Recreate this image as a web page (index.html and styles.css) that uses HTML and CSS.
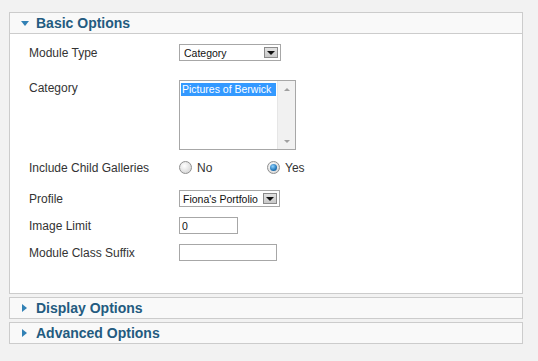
FILE: index.html
```html
<!DOCTYPE html>
<html lang="en">
<head>
    <meta charset="UTF-8">
    <title>Module Options</title>
    <link rel="stylesheet" href="styles.css">
</head>
<body>
    <div class="panel">
        <div class="panel-head open">
            <span class="arrow down"></span>
            <h3>Basic Options</h3>
        </div>
        <div class="panel-body">
            <div class="row">
                <label>Module Type</label>
                <div class="select w-type"><span>Category</span><i class="drop"></i></div>
            </div>
            <div class="row top">
                <label>Category</label>
                <div class="listbox">
                    <div class="items">
                        <div class="item selected">Pictures of Berwick</div>
                    </div>
                    <div class="scroll">
                        <i class="up"></i>
                        <i class="dn"></i>
                    </div>
                </div>
            </div>
            <div class="row radios">
                <label>Include Child Galleries</label>
                <span class="opt"><span class="radio"></span>No</span>
                <span class="opt"><span class="radio on"></span>Yes</span>
            </div>
            <div class="row">
                <label>Profile</label>
                <div class="select w-profile"><span>Fiona's Portfolio</span><i class="drop"></i></div>
            </div>
            <div class="row">
                <label>Image Limit</label>
                <div class="input w-limit">0</div>
            </div>
            <div class="row">
                <label>Module Class Suffix</label>
                <div class="input w-suffix"></div>
            </div>
        </div>
    </div>

    <div class="panel">
        <div class="panel-head">
            <span class="arrow right"></span>
            <h3>Display Options</h3>
        </div>
    </div>

    <div class="panel">
        <div class="panel-head">
            <span class="arrow right"></span>
            <h3>Advanced Options</h3>
        </div>
    </div>
</body>
</html>
```

FILE: styles.css
```css
body{
    margin: 0;
    padding: 12px 0 0 9px;
    background: #f2f2f2;
    font-family: "Liberation Sans", Arial, sans-serif;
    color: #333;
}
.panel{
    width: 514px;
    box-sizing: border-box;
    border: 1px solid #cccccc;
    background: #f9f9f9;
    margin-bottom: 3px;
}
.panel-head{
    height: 20px;
    display: flex;
    align-items: center;
    padding-left: 11px;
}
.panel-head.open{
    border-bottom: 1px solid #cccccc;
}
.panel-head h3{
    margin: 0;
    font-size: 14px;
    font-weight: bold;
    color: #235b80;
}
.arrow{
    width: 0;
    height: 0;
    margin-right: 6px;
}
.arrow.down{
    border-left: 4px solid transparent;
    border-right: 4px solid transparent;
    border-top: 5px solid #3281b5;
    margin-right: 7px;
}
.arrow.right{
    border-top: 4px solid transparent;
    border-bottom: 4px solid transparent;
    border-left: 5px solid #3281b5;
    margin-left: 1px;
    margin-right: 9px;
}

.panel-body{
    background: #fff;
    height: 259px;
    box-sizing: border-box;
    padding: 10px 0 0 19px;
}
.row{
    display: flex;
    align-items: center;
    font-size: 12px;
    margin-bottom: 10px;
}
.row label{
    width: 150px;
    line-height: 16px;
}
.row.top{
    align-items: flex-start;
    margin-top: 19px;
}
.row.radios{
    height: 15px;
    margin-bottom: 15px;
}

.select, .input{
    box-sizing: border-box;
    height: 17px;
    border: 1px solid #a7a7a7;
    background: #fff;
    font-size: 10.5px;
    color: #111;
    display: flex;
    align-items: center;
    padding-left: 4px;
}
.select span{
    flex: 1;
    white-space: nowrap;
    overflow: hidden;
}
.w-type{ width: 102px; }
.w-profile{ width: 101px; padding-left: 3px; }
.w-limit{ width: 59px; padding-left: 2px; }
.w-suffix{ width: 98px; }
.drop{
    width: 14px;
    height: 11px;
    box-sizing: border-box;
    margin: 0 2px 0 1px;
    border: 1px solid #8a8a8a;
    background: linear-gradient(#e2e2e2, #c9c9c9);
    display: flex;
    align-items: center;
    justify-content: center;
}
.drop::after{
    content: "";
    border-left: 4px solid transparent;
    border-right: 4px solid transparent;
    border-top: 4px solid #111;
    margin-top: 1px;
}

.listbox{
    width: 117px;
    height: 70px;
    box-sizing: border-box;
    border: 1px solid #a7a7a7;
    display: flex;
    font-size: 10.5px;
}
.items{
    flex: 1;
    padding: 2px 1px;
    overflow: hidden;
}
.item.selected{
    background: #3399ff;
    color: #fff;
    height: 13px;
    line-height: 13px;
    padding-left: 1px;
    white-space: nowrap;
}
.scroll{
    width: 18px;
    background: #f1f1f1;
    border-left: 1px solid #e6e6e6;
    display: flex;
    flex-direction: column;
    justify-content: space-between;
    align-items: center;
    padding: 7px 0 6px;
    box-sizing: border-box;
}
.scroll .up{
    border-left: 3px solid transparent;
    border-right: 3px solid transparent;
    border-bottom: 3px solid #a0a0a0;
}
.scroll .dn{
    border-left: 3px solid transparent;
    border-right: 3px solid transparent;
    border-top: 3px solid #a0a0a0;
}

.opt{
    display: flex;
    align-items: center;
    width: 88px;
}
.radio{
    width: 13px;
    height: 13px;
    box-sizing: border-box;
    border: 1px solid #8f8f8f;
    border-radius: 50%;
    background: radial-gradient(circle at 40% 35%, #ffffff, #dcdcdc 70%, #c9c9c9);
    margin-right: 5px;
    display: flex;
    align-items: center;
    justify-content: center;
}
.radio.on::after{
    content: "";
    width: 7px;
    height: 7px;
    border-radius: 50%;
    background: radial-gradient(circle at 40% 35%, #8fd3ff, #2276b8 60%, #0f4d86);
}
```
